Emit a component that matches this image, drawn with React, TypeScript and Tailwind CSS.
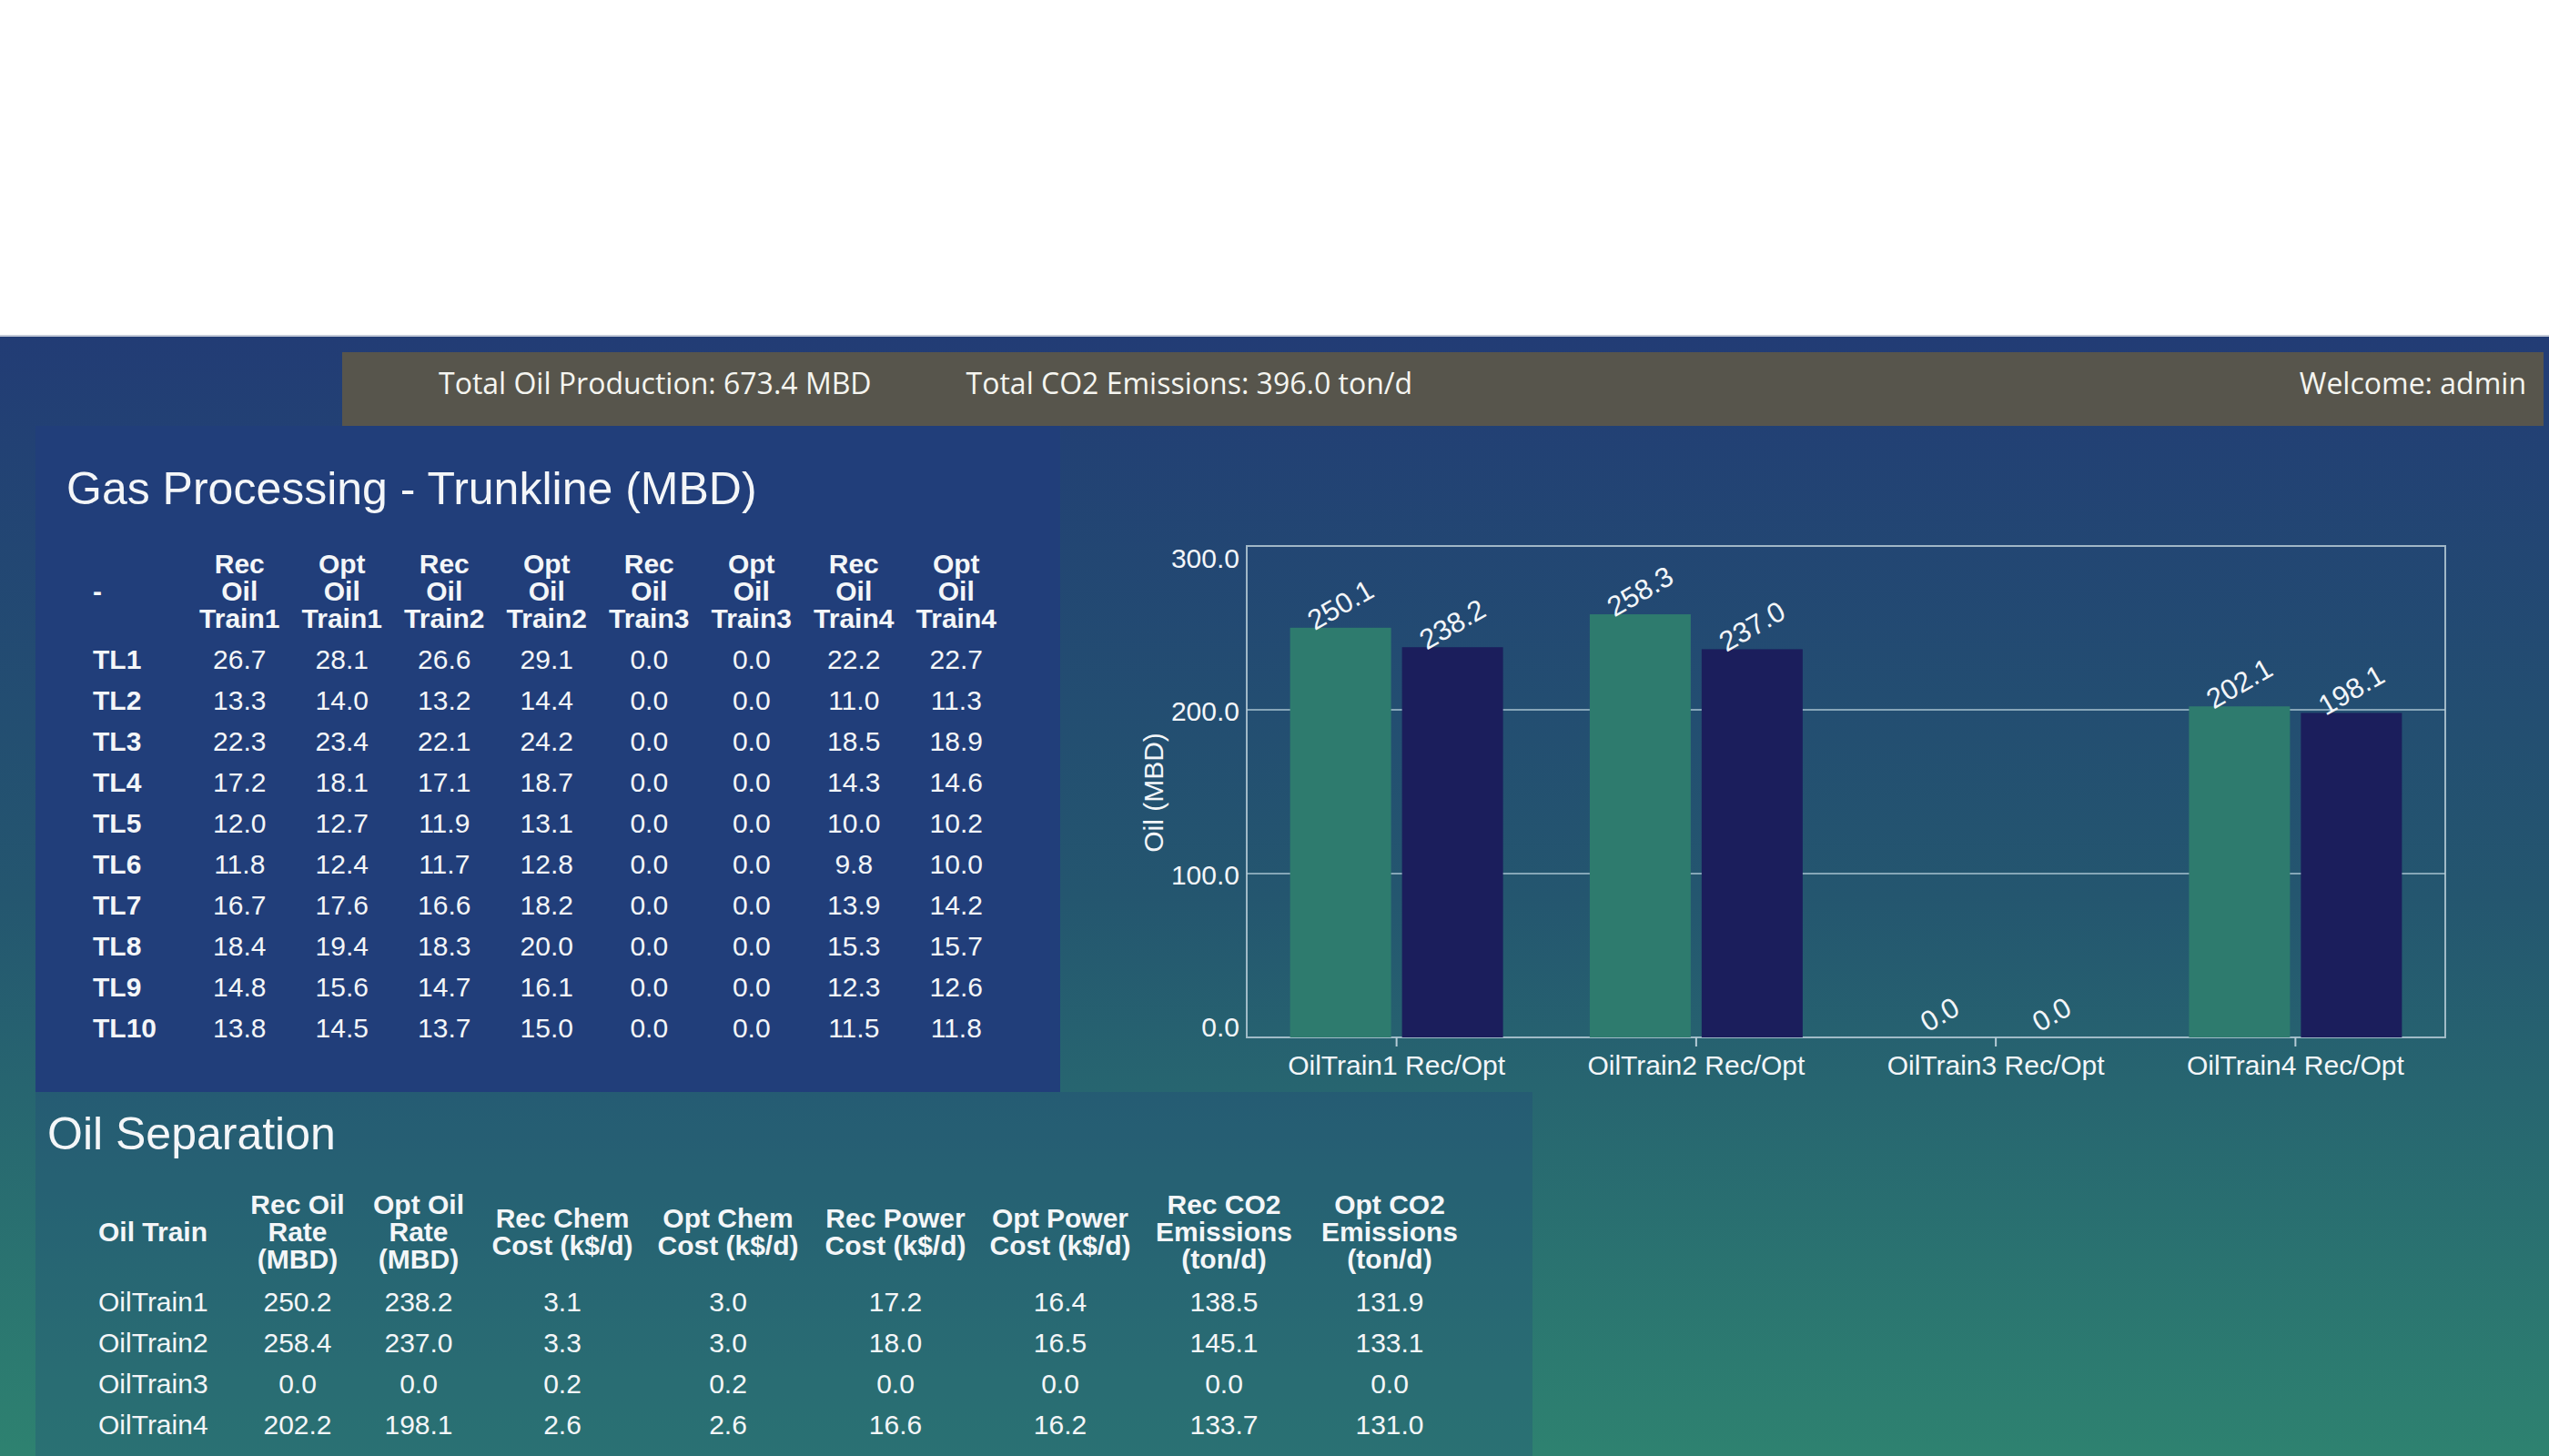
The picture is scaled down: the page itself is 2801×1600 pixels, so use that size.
import React from "react";

const gasHeaders = [
  ["Rec", "Oil", "Train1"],
  ["Opt", "Oil", "Train1"],
  ["Rec", "Oil", "Train2"],
  ["Opt", "Oil", "Train2"],
  ["Rec", "Oil", "Train3"],
  ["Opt", "Oil", "Train3"],
  ["Rec", "Oil", "Train4"],
  ["Opt", "Oil", "Train4"],
];

const gasRows: [string, string[]][] = [
  ["TL1", ["26.7", "28.1", "26.6", "29.1", "0.0", "0.0", "22.2", "22.7"]],
  ["TL2", ["13.3", "14.0", "13.2", "14.4", "0.0", "0.0", "11.0", "11.3"]],
  ["TL3", ["22.3", "23.4", "22.1", "24.2", "0.0", "0.0", "18.5", "18.9"]],
  ["TL4", ["17.2", "18.1", "17.1", "18.7", "0.0", "0.0", "14.3", "14.6"]],
  ["TL5", ["12.0", "12.7", "11.9", "13.1", "0.0", "0.0", "10.0", "10.2"]],
  ["TL6", ["11.8", "12.4", "11.7", "12.8", "0.0", "0.0", "9.8", "10.0"]],
  ["TL7", ["16.7", "17.6", "16.6", "18.2", "0.0", "0.0", "13.9", "14.2"]],
  ["TL8", ["18.4", "19.4", "18.3", "20.0", "0.0", "0.0", "15.3", "15.7"]],
  ["TL9", ["14.8", "15.6", "14.7", "16.1", "0.0", "0.0", "12.3", "12.6"]],
  ["TL10", ["13.8", "14.5", "13.7", "15.0", "0.0", "0.0", "11.5", "11.8"]],
];

const sepHeaders = [
  ["Rec Oil", "Rate", "(MBD)"],
  ["Opt Oil", "Rate", "(MBD)"],
  ["Rec Chem", "Cost (k$/d)"],
  ["Opt Chem", "Cost (k$/d)"],
  ["Rec Power", "Cost (k$/d)"],
  ["Opt Power", "Cost (k$/d)"],
  ["Rec CO2", "Emissions", "(ton/d)"],
  ["Opt CO2", "Emissions", "(ton/d)"],
];

const sepRows: [string, string[]][] = [
  ["OilTrain1", ["250.2", "238.2", "3.1", "3.0", "17.2", "16.4", "138.5", "131.9"]],
  ["OilTrain2", ["258.4", "237.0", "3.3", "3.0", "18.0", "16.5", "145.1", "133.1"]],
  ["OilTrain3", ["0.0", "0.0", "0.2", "0.2", "0.0", "0.0", "0.0", "0.0"]],
  ["OilTrain4", ["202.2", "198.1", "2.6", "2.6", "16.6", "16.2", "133.7", "131.0"]],
];

const chartData = [
  { name: "OilTrain1 Rec/Opt", rec: 250.1, opt: 238.2 },
  { name: "OilTrain2 Rec/Opt", rec: 258.3, opt: 237.0 },
  { name: "OilTrain3 Rec/Opt", rec: 0.0, opt: 0.0 },
  { name: "OilTrain4 Rec/Opt", rec: 202.1, opt: 198.1 },
];

const font = "'Liberation Sans', Arial, sans-serif";

function OilChart() {
  const left = 205;
  const right = 1522;
  const top = 132;
  const bottom = 672;
  const k = (bottom - top) / 300;
  const band = (right - left) / chartData.length;
  const y = (v: number) => bottom - v * k;
  const ticks = [
    { v: 300, ty: 145 },
    { v: 200, ty: 313 },
    { v: 100, ty: 493 },
    { v: 0, ty: 660 },
  ];
  return (
    <svg width="1636" height="732" viewBox="0 0 1636 732" className="block shrink-0" fontFamily={font}>
      {[100, 200].map((v) => (
        <line key={v} x1={left} x2={right} y1={y(v)} y2={y(v)} stroke="#9fbccb" strokeOpacity="0.8" strokeWidth="2" />
      ))}
      <rect x={left} y={top} width={right - left} height={bottom - top} fill="none" stroke="#b6cbd6" strokeOpacity="0.85" strokeWidth="2" />
      {ticks.map((t) => (
        <text key={t.v} x={197} y={t.ty} fill="#f3f6f9" fontSize="30" textAnchor="end" dominantBaseline="central">
          {t.v.toFixed(1)}
        </text>
      ))}
      <text x={102} y={403} fill="#f3f6f9" fontSize="30" textAnchor="middle" dominantBaseline="central" transform="rotate(-90 102 403)">
        Oil (MBD)
      </text>
      {chartData.map((d, i) => {
        const c = left + band * (i + 0.5);
        const bars = [
          { v: d.rec, x: c - 117, fill: "#2e7b6e" },
          { v: d.opt, x: c + 6, fill: "#1b1e5c" },
        ];
        return (
          <g key={d.name}>
            <line x1={c} x2={c} y1={bottom} y2={bottom + 10} stroke="#b6cbd6" strokeWidth="2" />
            {bars.map((b, j) => {
              const bx = b.x + 55.5;
              const ly = y(b.v) - 25;
              return (
                <g key={j}>
                  {b.v > 0 && <rect x={b.x} y={y(b.v)} width={111} height={bottom - y(b.v)} fill={b.fill} />}
                  <text x={bx} y={ly} fill="#f3f6f9" fontSize="31" textAnchor="middle" dominantBaseline="central" transform={`rotate(-30 ${bx} ${ly})`}>
                    {b.v.toFixed(1)}
                  </text>
                </g>
              );
            })}
            <text x={c} y={702} fill="#f3f6f9" fontSize="30" textAnchor="middle" dominantBaseline="central">
              {d.name}
            </text>
          </g>
        );
      })}
    </svg>
  );
}

export default function App() {
  return (
    <div className="w-[2801px] h-[1600px] overflow-hidden bg-white text-[#f4f6f8]" style={{ fontFamily: font }}>
      <div className="h-[370px] bg-white border-b-2 border-[#c3cad8]" />
      <div className="h-[1230px] flex flex-col bg-linear-to-b from-[#223c75] via-[#24566f] to-[#2e8270]">
        <div
          className="mt-[17px] ml-[376px] mr-[6px] h-[81px] shrink-0 flex items-center pb-[14px] pl-[106px] pr-[19px] bg-[#57554c] text-[32px] leading-none text-[#f5f5f0]"
          style={{ fontFamily: "'Open Sans', sans-serif" }}
        >
          <span>Total Oil Production: 673.4 MBD</span>
          <span className="ml-[104px]">Total CO2 Emissions: 396.0 ton/d</span>
          <span className="ml-auto">Welcome: admin</span>
        </div>

        <div className="flex h-[732px] shrink-0">
          <div className="ml-[39px] w-[1126px] shrink-0 bg-[#213e7a] pt-[44px] pl-[34px]">
            <h1 className="text-[50px] leading-none font-normal">Gas Processing - Trunkline (MBD)</h1>
            <div className="mt-[36px] ml-[29px] grid grid-cols-[105px_repeat(8,112.5px)] text-[30px] leading-[30px]">
              <div className="h-[104px] flex items-center font-bold">-</div>
              {gasHeaders.map((h, i) => (
                <div key={i} className="h-[104px] flex flex-col items-center justify-center font-bold">
                  {h.map((l) => (
                    <span key={l}>{l}</span>
                  ))}
                </div>
              ))}
              {gasRows.map(([name, vals]) => (
                <React.Fragment key={name}>
                  <div className="h-[45px] flex items-center font-bold">{name}</div>
                  {vals.map((v, j) => (
                    <div key={j} className="h-[45px] flex items-center justify-center">
                      {v}
                    </div>
                  ))}
                </React.Fragment>
              ))}
            </div>
          </div>
          <OilChart />
        </div>

        <div className="ml-[39px] w-[1645px] flex-1 bg-[#20407a]/25 pt-[21px] pl-[13px] overflow-hidden">
          <h2 className="text-[50px] leading-none font-normal">Oil Separation</h2>
          <div className="mt-[29px] ml-[56px] grid grid-cols-[154px_130px_136px_180px_184px_184px_178px_182px_182px] text-[30px] leading-[30px]">
            <div className="h-[108px] flex items-center font-bold">Oil Train</div>
            {sepHeaders.map((h, i) => (
              <div key={i} className="h-[108px] flex flex-col items-center justify-center text-center font-bold">
                {h.map((l) => (
                  <span key={l}>{l}</span>
                ))}
              </div>
            ))}
            {sepRows.map(([name, vals]) => (
              <React.Fragment key={name}>
                <div className="h-[45px] flex items-center">{name}</div>
                {vals.map((v, j) => (
                  <div key={j} className="h-[45px] flex items-center justify-center">
                    {v}
                  </div>
                ))}
              </React.Fragment>
            ))}
          </div>
        </div>
      </div>
    </div>
  );
}
